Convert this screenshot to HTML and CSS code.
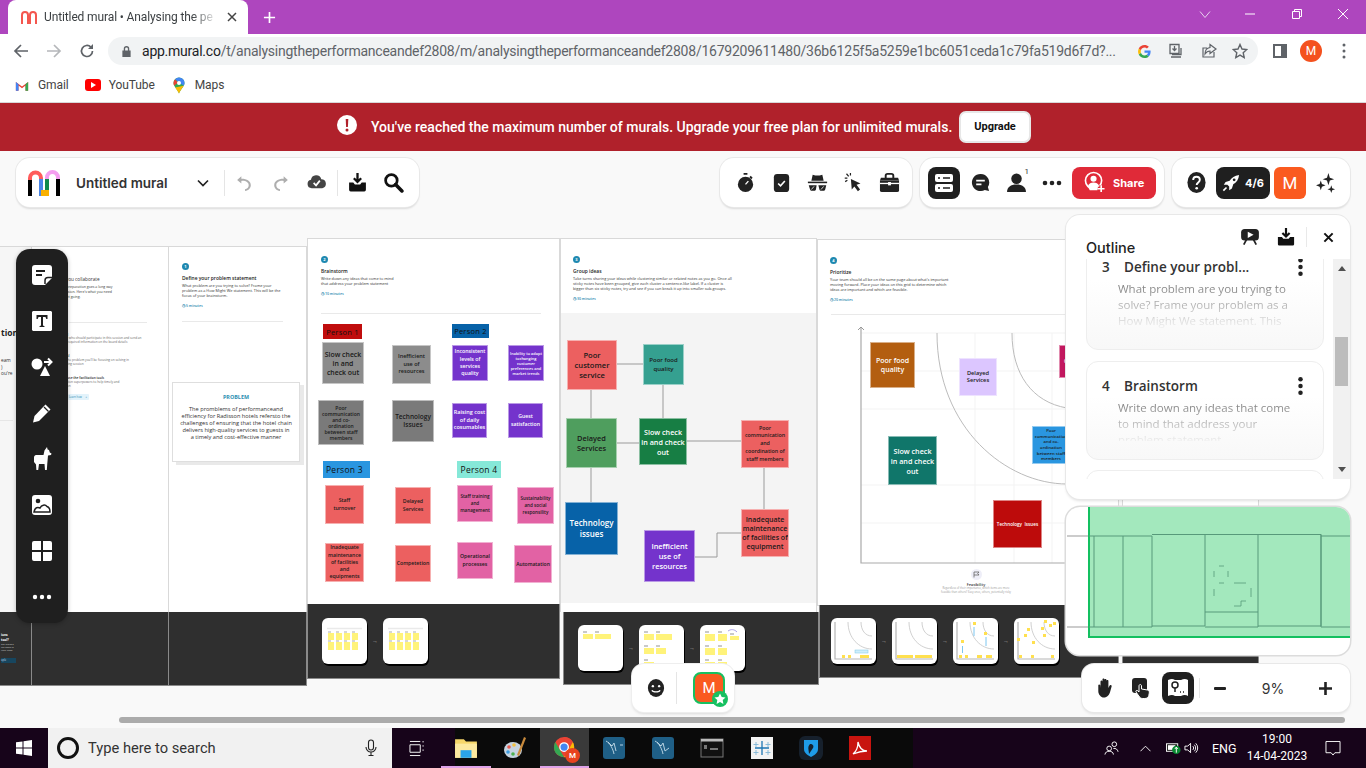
FILE: index.html
```html
<!DOCTYPE html>
<html lang="en">
<head>
<meta charset="utf-8">
<title>Untitled mural</title>
<link rel="stylesheet" href="styles.css">
</head>
<body>
<div class="tabstrip">
  <div class="tab">
    <svg class="fav" viewBox="0 0 18 16"><path d="M2 15V6a3 3 0 0 1 6 0v8h2V6a3 3 0 0 1 6 0v9" fill="none" stroke="#f4574f" stroke-width="2"/></svg>
    <span class="tab-title">Untitled mural • Analysing the pe</span>
    <svg class="tab-x" viewBox="0 0 10 10"><path d="M1 1l8 8M9 1l-8 8" stroke="#444" stroke-width="1.5"/></svg>
  </div>
  <svg class="newtab" viewBox="0 0 14 14"><path d="M7 1v12M1 7h12" stroke="#fff" stroke-width="1.8"/></svg>
  <div class="winctl">
    <svg viewBox="0 0 12 12"><path d="M1 3.5l5 6 5-6" fill="none" stroke="#e8d0ee" stroke-width="1"/></svg>
    <svg viewBox="0 0 12 12"><path d="M1 6h10" stroke="#fff"/></svg>
    <svg viewBox="0 0 12 12"><path d="M1.5 3.5h7v7h-7zM3.5 3.5v-2h7v7h-2" fill="none" stroke="#fff"/></svg>
    <svg viewBox="0 0 12 12"><path d="M1 1l10 10M11 1L1 11" stroke="#fff"/></svg>
  </div>
</div>

<div class="toolbar">
  <svg class="nav" viewBox="0 0 16 16"><path d="M15 8H2M8 2L2 8l6 6" fill="none" stroke="#5f6368" stroke-width="1.7"/></svg>
  <svg class="nav" viewBox="0 0 16 16"><path d="M1 8h13M8 2l6 6-6 6" fill="none" stroke="#b5b7ba" stroke-width="1.7"/></svg>
  <svg class="nav" viewBox="0 0 16 16"><path d="M13.5 8a5.5 5.5 0 1 1-1.6-3.9" fill="none" stroke="#5f6368" stroke-width="1.7"/><path d="M14 1v5H9z" fill="#5f6368"/></svg>
  <div class="omnibox">
    <svg class="lock" viewBox="0 0 12 14"><path d="M3 6V4a3 3 0 0 1 6 0v2h1.500v7h-9V6zm1.500 0h3V4a1.500 1.500 0 0 0-3 0z" fill="#5f6368"/></svg>
    <span class="url"><b>app.mural.co</b>/t/analysingtheperformanceandef2808/m/analysingtheperformanceandef2808/1679209611480/36b6125f5a5259e1bc6051ceda1c79fa519d6f7d?...</span>
    <svg class="omni-g" viewBox="0 0 16 16"><path d="M14.500 8.200c0-.5 0-.9-.1-1.300H8v2.500h3.700c-.2.900-.7 1.600-1.400 2.100l2.200 1.700c1.300-1.200 2-3 2-5z" fill="#4285f4"/><path d="M8 15c1.900 0 3.500-.6 4.500-1.800l-2.200-1.700c-.6.400-1.400.700-2.300.700-1.800 0-3.300-1.200-3.800-2.800L1.900 11.200C3 13.500 5.300 15 8 15z" fill="#34a853"/><path d="M4.200 9.400c-.3-.9-.3-1.900 0-2.800L1.900 4.800c-1 1.900-1 4.500 0 6.400z" fill="#fbbc05"/><path d="M8 3.800c1 0 1.900.3 2.600 1l2-2C11.400 1.700 9.800 1 8 1 5.300 1 3 2.500 1.900 4.800l2.300 1.800C4.700 5 6.200 3.800 8 3.800z" fill="#ea4335"/></svg>
    <svg class="omni-a" viewBox="0 0 16 16"><path d="M2 1.500h9v9H2zM13 5v6.500H4" fill="none" stroke="#5f6368" stroke-width="1.300"/><path d="M6.500 3v4M4.500 5.500l2 2 2-2" fill="none" stroke="#5f6368" stroke-width="1.300"/><path d="M3 14h10" stroke="#5f6368" stroke-width="1.500"/></svg>
    <svg class="omni-b" viewBox="0 0 16 16"><path d="M13 9v5H2V5h4M9 1.500L15 6l-6 4.500V8C6 8 5 9.500 4 11c0-4 2-6 5-6.500z" fill="none" stroke="#5f6368" stroke-width="1.200"/></svg>
    <svg class="omni-c" viewBox="0 0 16 16"><path d="M8 1.500l2 4.500 4.800.5-3.600 3.200 1 4.800L8 12.100l-4.200 2.400 1-4.800L1.200 6.500 6 6z" fill="none" stroke="#5f6368" stroke-width="1.400"/></svg>
  </div>
  <svg class="side" viewBox="0 0 14 14"><path d="M1 1h12v12H1z" fill="none" stroke="#5f6368" stroke-width="2"/><path d="M8 1h5v12H8z" fill="#5f6368"/></svg>
  <div class="avatar">M</div>
  <svg class="kebab" viewBox="0 0 4 16"><circle cx="2" cy="2" r="1.500"/><circle cx="2" cy="8" r="1.500"/><circle cx="2" cy="14" r="1.500"/></svg>
</div>

<div class="bookmarks">
  <svg class="bm-icon" viewBox="0 0 16 12"><path d="M1 12V2l7 5 7-5v10h-3V6L8 9 4 6v6z" fill="#ea4335"/><path d="M1 12V2l3 2.500V12z" fill="#4285f4"/><path d="M15 12V2l-3 2.500V12z" fill="#34a853"/></svg>
  <span class="bm-text">Gmail</span>
  <svg class="bm-icon bm-yt" viewBox="0 0 16 12"><rect width="16" height="12" rx="3" fill="#f00"/><path d="M6 3l5 3-5 3z" fill="#fff"/></svg>
  <span class="bm-text">YouTube</span>
  <svg class="bm-icon bm-map" viewBox="0 0 12 16"><path d="M6 0a5.500 5.500 0 0 0-5.500 5.500C.5 9 4.500 12 6 16c1.500-4 5.500-7 5.500-10.500A5.500 5.500 0 0 0 6 0z" fill="#34a853"/><path d="M6 0a5.500 5.500 0 0 1 5.500 5.500c0 1-.3 1.800-.8 2.700L2 2C3 .8 4.400 0 6 0z" fill="#4285f4"/><path d="M.5 5.500C.5 4.200 1 3 2 2l3 3-3.800 3.300C.8 7.400.5 6.500.5 5.500z" fill="#ea4335"/><path d="M10.700 8.200C9 11 6.900 13.300 6 16c-.8-2.200-2.500-4-3.800-6z" fill="#fbbc05"/><circle cx="6" cy="5.500" r="2" fill="#fff"/></svg>
  <span class="bm-text">Maps</span>
</div>

<div class="banner">
  <svg class="banner-i" viewBox="0 0 20 20"><circle cx="10" cy="10" r="10" fill="#fff"/><path d="M8.700 4h2.600l-.4 8H9.100z" fill="#b0212b"/><circle cx="10" cy="15" r="1.500" fill="#b0212b"/></svg>
  <span class="banner-text">You've reached the maximum number of murals. Upgrade your free plan for unlimited murals.</span>
  <span class="upgrade">Upgrade</span>
</div>

<main class="board">
  <!-- Canvas: the mural's panels keep their own place on the free canvas -->
  <section class="panel pa">
    <div class="pa-title">tion</div>
    <p class="pa-text">eam<br>)<br>ou're</p>
    <div class="pa-line"></div>
  </section>
  <div class="strip sa"><div class="sa-text">ions<br>tool?</div><div class="sa-small">Get aligned<br>the goals in<br>your team</div><div class="sa-btn">ople</div></div>

  <section class="panel pb">
    <h3 class="pb-h">Before you collaborate</h3>
    <p class="pb-p">A little bit of preparation goes a long way<br>to a great session. Here's what you need<br>before you get going.</p>
    <div class="rule rule-b"></div>
    <p class="pb-s"><b>Set up sharing</b><br>Invite everyone who should participate in this session and send an<br>email with the required information on the board details</p>
    <p class="pb-s"><b>Define the goal</b><br>Clearly define the problem you'll be focusing on solving in<br>the brainstorming session</p>
    <p class="pb-s"><b>Learn how to use the facilitation tools</b><br>Use the facilitation superpowers to help timely and<br>engaging session</p>
    <div class="pb-btn">Learn how <span>+</span></div>
  </section>
  <div class="strip sb"></div>

  <section class="panel pc">
    <div class="hdr hdr-c">
      <span class="num">1</span>
      <h3>Define your problem statement</h3>
      <p>What problem are you trying to solve? Frame your<br>problem as a How Might We statement. This will be the<br>focus of your brainstorm.</p>
      <div class="time">◷ 5 minutes</div>
    </div>
    <div class="rule rule-c"></div>
    <div class="problem">
      <h4>PROBLEM</h4>
      <p>The promblems of performanceand<br>efficiency for Radisson hotels refersto the<br>challenges of ensuring that the hotel chain<br>delivers high-quality services to guests in<br>a timely  and cost-effective manner</p>
    </div>
  </section>
  <div class="strip sc"></div>

  <section class="panel pd">
    <div class="hdr hdr-d">
      <span class="num">2</span>
      <h3>Brainstorm</h3>
      <p>Write down any ideas that come to mind<br>that address your problem statement</p>
      <div class="time">◷ 10 minutes</div>
    </div>
    <div class="rule rule-d"></div>
    <div class="note lbl d1 red-l">Person 1</div>
    <div class="note gray1 d2 t69">Slow check<br>in and<br>check out</div>
    <div class="note gray1 d3 t55">Inefficient<br>use of<br>resources</div>
    <div class="note lbl d4 blue-l">Person 2</div>
    <div class="note pur d5 t52">Inconsistent<br>levels of<br>services<br>quality</div>
    <div class="note pur d6 t39">Inability to adapt<br>tochanging<br>customer<br>preferences and<br>market trends</div>
    <div class="note gray2 d7 t50">Poor<br>communication<br>and co-<br>ordination<br>between staff<br>members</div>
    <div class="note gray2 d8 t65">Technology<br>Issues</div>
    <div class="note pur d9 t55b">Raising cost<br>of daily<br>cosumables</div>
    <div class="note pur d10 t52b">Guest<br>satisfaction</div>
    <div class="note lbl d11 sky-l">Person 3</div>
    <div class="note lbl d12 mint-l">Person 4</div>
    <div class="note coral d13 t52b">Staff<br>turnover</div>
    <div class="note coral d14 t52b">Delayed<br>Services</div>
    <div class="note pink d15 t46">Staff training<br>and<br>management</div>
    <div class="note pink d16 t46">Sustainability<br>and social<br>responsility</div>
    <div class="note coral d17 t52">Inadequate<br>maintenance<br>of facilities<br>and<br>equipments</div>
    <div class="note coral d18 t52">Competetion</div>
    <div class="note pink d19 t52b">Operational<br>processes</div>
    <div class="note pink d20 t50">Automatation</div>
  </section>
  <div class="strip sd">
    <div class="thumb"><svg viewBox="0 0 45 46"><use href="#t-d"/></svg></div>
    <span class="arr">→</span>
    <div class="thumb"><svg viewBox="0 0 45 46"><use href="#t-d"/></svg></div>
  </div>

  <section class="panel pe">
    <div class="hdr hdr-e">
      <span class="num">3</span>
      <h3>Group ideas</h3>
      <p>Take turns sharing your ideas while clustering similar or related notes as you go. Once all<br>sticky notes have been grouped, give each cluster a sentence-like label. If a cluster is<br>bigger than six sticky notes, try and see if you can break it up into smaller sub-groups.</p>
      <div class="time">◷ 30 minutes</div>
    </div>
    <div class="pe-gray"></div>
    <svg class="wires" viewBox="0 0 257 374"><path d="M57 126H83M31 152V180M103 147V180M57 205H79M127 203H181M204 230V271M31 230V264M135 319H157V295H181" fill="none" stroke="#9a9a9a"/></svg>
    <div class="note coral e1 t76">Poor<br>customer<br>service</div>
    <div class="note teal e2 t60">Poor food<br>quality</div>
    <div class="note green e3 t74">Delayed<br>Services</div>
    <div class="note dgreen e4 t72">Slow check<br>in and check<br>out</div>
    <div class="note coral e5 t54">Poor<br>communication<br>and<br>coordination of<br>staff members</div>
    <div class="note navy e6 t80">Technology<br>issues</div>
    <div class="note pur e7 t74">Inefficient<br>use of<br>resources</div>
    <div class="note coral e8 t70">Inadequate<br>maintenance<br>of facilities of<br>equipment</div>
  </section>
  <div class="strip se">
    <div class="thumb"><svg viewBox="0 0 45 46"><use href="#t-e1"/></svg></div>
    <span class="arr">→</span>
    <div class="thumb"><svg viewBox="0 0 45 46"><use href="#t-e2"/></svg></div>
    <span class="arr">→</span>
    <div class="thumb"><svg viewBox="0 0 45 46"><use href="#t-e3"/></svg></div>
  </div>

  <section class="panel pf">
    <div class="hdr hdr-f">
      <span class="num">4</span>
      <h3>Prioritize</h3>
      <p>Your team should all be on the same page about what's important<br>moving forward. Place your ideas on this grid to determine which<br>ideas are important and which are feasible.</p>
      <div class="time">◷ 20 minutes</div>
    </div>
    <div class="rule rule-f"></div>
    <svg class="chart" viewBox="0 0 310 340">
      <path d="M44 94H310M44 132H310M44 170H310M44 246H310M44 284H310M158 94V324M197 94V324M235 94V324" stroke="#f3f3f3" fill="none"/>
      <path d="M120 94C120 190 190 245 250 245M195 94C195 135 215 163 250 169" stroke="#bcbcbc" fill="none"/>
      <path d="M44 88V324H310" stroke="#aaa" stroke-width="1.200" fill="none"/>
      <path d="M41 91l3-3 3 3" stroke="#999" fill="none"/>
    </svg>
    <div class="note brown f1 t70">Poor food<br>quality</div>
    <div class="note lav f2 t57">Delayed<br>Services</div>
    <div class="note mag f3 t46">Competition</div>
    <div class="note dteal f4 t72">Slow check<br>in and check<br>out</div>
    <div class="note sky f5 t43">Poor<br>communication<br>and co-<br>ordination<br>between staff<br>members</div>
    <div class="note crim f6 t46">Technology&nbsp; Issues</div>
    <div class="feas">
      <svg viewBox="0 0 11 11"><circle cx="5.500" cy="5.500" r="5.500" fill="#eeeef8"/><path d="M3 8.500V3h5L6.700 4.500 8 6H3" fill="none" stroke="#555" stroke-width=".7"/></svg>
      <b>Feasibility</b>
      <span>Regardless of their importance, which items are more<br>feasible than others? Easy ones, others, potentially risky</span>
    </div>
  </section>
  <div class="strip sf">
    <div class="thumb"><svg viewBox="0 0 45 46"><use href="#t-f"/><use href="#t-f1"/></svg></div>
    <span class="arr">→</span>
    <div class="thumb"><svg viewBox="0 0 45 46"><use href="#t-f"/><use href="#t-f2"/></svg></div>
    <span class="arr">→</span>
    <div class="thumb"><svg viewBox="0 0 45 46"><use href="#t-f"/><use href="#t-f3"/></svg></div>
    <span class="arr">→</span>
    <div class="thumb"><svg viewBox="0 0 45 46"><use href="#t-f"/><use href="#t-f4"/></svg></div>
  </div>

  <section class="panel pg"></section>
  <div class="strip sg"></div>

  <div class="hscroll"></div>

  <!-- Floating chrome of the app, over the canvas -->
  <div class="topbar">
    <div class="bar b1">
      <svg class="logo" viewBox="0 0 34 26">
        <path d="M3 26V9" stroke="#000" stroke-width="4" fill="none"/>
        <path d="M3 10V8a5.500 5.500 0 0 1 11 0v2" stroke="#ff5b5b" stroke-width="4" fill="none"/>
        <path d="M14 26V9" stroke="#4a86e8" stroke-width="4" fill="none"/>
        <rect x="14" y="20" width="8" height="6" fill="#f9b000"/>
        <path d="M20 20V8" stroke="#0f8a4c" stroke-width="4" fill="none"/>
        <path d="M20 9V7.500a5.500 5.500 0 0 1 11 0V10" stroke="#f59df0" stroke-width="4" fill="none"/>
        <path d="M31 26V9" stroke="#000" stroke-width="4" fill="none"/>
      </svg>
      <span class="mural-name">Untitled mural</span>
      <svg class="chev" viewBox="0 0 12 8"><path d="M1 1.500l5 5 5-5" fill="none" stroke="#222" stroke-width="1.700"/></svg>
      <i class="div"></i>
      <span class="cell"><svg viewBox="0 0 20 20"><path d="M7 4L3 7.500 7 11V8.500c4-.5 7 1.500 7 4 0 2-1.500 3.500-3.500 4v1.500c3.500-.5 5.500-3 5.500-5.500 0-3.500-3.500-6-9-6z" fill="#aeaeae"/></svg></span>
      <span class="cell"><svg viewBox="0 0 20 20"><path d="M13 4l4 3.500L13 11V8.500c-4-.5-7 1.500-7 4 0 2 1.500 3.500 3.500 4v1.500C6 17.500 4 15 4 12.500c0-3.500 3.500-6 9-6z" fill="#aeaeae"/></svg></span>
      <span class="cell"><svg viewBox="0 0 22 20"><path d="M6 16a4.500 4.500 0 0 1-.8-8.900A5.500 5.500 0 0 1 16 6.500a4.800 4.800 0 0 1 1 9.500z" fill="#444"/><path d="M8 10.500l2.500 2.500 4-5" fill="none" stroke="#fff" stroke-width="1.800"/></svg></span>
      <i class="div div2"></i>
      <span class="cell"><svg viewBox="0 0 20 20"><path d="M10 1v8M6.500 6L10 9.500 13.500 6" fill="none" stroke="#111" stroke-width="2.200"/><path d="M2 10h4l1.500 2h5L14 10h4v7a1.500 1.500 0 0 1-1.500 1.500h-13A1.500 1.500 0 0 1 2 17z" fill="#111"/></svg></span>
      <span class="cell"><svg viewBox="0 0 20 20"><circle cx="8" cy="8" r="5.500" fill="none" stroke="#111" stroke-width="2.600"/><path d="M12 12l6 6" stroke="#111" stroke-width="3.400" stroke-linecap="round"/></svg></span>
    </div>
    <div class="bar b2">
      <span class="cell"><svg viewBox="0 0 20 22"><path d="M8 1h4v2H8zM15.500 4l2 2-1.500 1.500-2-2z" fill="#222"/><circle cx="10" cy="13" r="8" fill="#222"/><path d="M10 13l3-3.500" stroke="#fff" stroke-width="1.400"/></svg></span>
      <span class="cell"><svg viewBox="0 0 20 22"><rect x="2" y="2" width="16" height="19" rx="3.500" fill="#222"/><path d="M6.500 12l2.500 2.500 4.500-5" fill="none" stroke="#fff" stroke-width="1.700"/></svg></span>
      <span class="cell"><svg viewBox="0 0 24 22"><path d="M5 9l1.500-7 3 1h5l3-1L19 9z" fill="#222"/><path d="M1 10h22v1.800H1z" fill="#222"/><path d="M2 14h9l-.8 5c-.2 1-1 1.500-2 1.500H5.500c-1 0-1.700-.5-2-1.500zM13 14h9l-1.200 5c-.3 1-1 1.500-2 1.500h-2.600c-1 0-1.800-.5-2-1.500z" fill="#222"/><path d="M5 19l3-3.500M16 19l3-3.500" stroke="#fff" stroke-width=".9"/></svg></span>
      <span class="cell"><svg viewBox="0 0 22 24"><path d="M8 8l11 5-4.500 1.500 4 5.500-2.500 2-4-5.500-3 3.500z" fill="#222"/><path d="M3 2l2.500 3M7.500 1v3M1 7h3M1.500 11l2.500-1.500" stroke="#222" stroke-width="1.400"/></svg></span>
      <span class="cell"><svg viewBox="0 0 22 22"><path d="M1 9h20v10a2 2 0 0 1-2 2H3a2 2 0 0 1-2-2z" fill="#222"/><path d="M7 7V4a2 2 0 0 1 2-2h4a2 2 0 0 1 2 2v3" fill="none" stroke="#222" stroke-width="2"/><path d="M1 12h20" stroke="#fff" stroke-width="1.400"/><rect x="9.500" y="10.500" width="3" height="3.500" fill="#fff"/><path d="M2 6h18l1 3H1z" fill="#222"/></svg></span>
    </div>
    <div class="bar b3">
      <span class="dbtn list"><svg viewBox="0 0 20 20"><rect x="1" y="1" width="18" height="8" rx="2" fill="#fff"/><rect x="1" y="11" width="18" height="8" rx="2" fill="#fff"/><path d="M4 5h2M9 5h7M4 15h2M9 15h7" stroke="#1f1f1f" stroke-width="1.500"/></svg></span>
      <span class="cell c3a"><svg viewBox="0 0 22 22"><path d="M11 2a9 9 0 1 1-4.500 16.800L2 20l1.300-4.200A9 9 0 0 1 11 2z" fill="#222" transform="matrix(-1 0 0 1 22 0)"/><path d="M6.500 9h9M6.500 13h5.500" stroke="#fff" stroke-width="1.700"/></svg></span>
      <span class="cell cuser"><svg viewBox="0 0 20 20"><circle cx="10" cy="6.500" r="5" fill="#222"/><path d="M1 19c0-4.500 3.500-7 9-7s9 2.500 9 7z" fill="#222"/></svg><sup class="one">1</sup></span>
      <span class="cell"><svg class="wide" viewBox="0 0 20 6"><circle cx="3" cy="3" r="2.300" fill="#222"/><circle cx="10" cy="3" r="2.300" fill="#222"/><circle cx="17" cy="3" r="2.300" fill="#222"/></svg></span>
      <span class="share"><svg viewBox="0 0 22 24"><circle cx="10" cy="10" r="8.500" fill="none" stroke="#fff" stroke-width="1.700"/><circle cx="10" cy="8" r="3.200" fill="#fff"/><path d="M4 16c1-3 3.500-4 6-4s5 1 6 4l-2 4H6z" fill="#fff"/><path d="M18 15v7M14.500 18.500h7" stroke="#e02a38" stroke-width="4"/><path d="M18 15v7M14.500 18.500h7" stroke="#fff" stroke-width="1.700"/></svg>Share</span>
    </div>
    <div class="bar b4">
      <span class="cell"><svg viewBox="0 0 22 22"><ellipse cx="11" cy="11" rx="9.500" ry="11" fill="#222"/><path d="M7.500 8.500C7.500 6 9 5 11 5s3.500 1.200 3.500 3.200c0 2.800-3.300 2.600-3.300 5.300" fill="none" stroke="#fff" stroke-width="2"/><circle cx="11.200" cy="17" r="1.400" fill="#fff"/></svg></span>
      <span class="dbtn rocket"><svg viewBox="0 0 20 20"><path d="M19 1c-5 .5-8.500 3-10.500 6.500L4 9 2 12h4l2 2v4l3-2 1.500-4.500C16 9.500 18.500 6 19 1z" fill="#fff"/><circle cx="13.500" cy="6.500" r="1.500" fill="#1f1f1f"/><path d="M1.500 18.500L5 15" stroke="#fff" stroke-width="1.800"/></svg>4/6</span>
      <span class="msq">M</span>
      <span class="cell"><svg viewBox="0 0 22 22"><path d="M13 1l1.500 5L19 7.500 14.500 9 13 14l-1.500-5L7 7.500 11.500 6zM5 9l1.200 3.500L10 14l-3.800 1.500L5 19l-1.200-3.500L0 14l3.800-1.500zM16 14l1 3 3 1-3 1-1 3-1-3-3-1 3-1z" fill="#222"/></svg></span>
    </div>
  </div>

  <nav class="tools">
    <svg viewBox="0 0 20 20"><path d="M3 0h14a3 3 0 0 1 3 3v10l-7 7H3a3 3 0 0 1-3-3V3a3 3 0 0 1 3-3z" fill="#fff"/><path d="M4 6h9M4 10h6" stroke="#1f1f1f" stroke-width="2"/><path d="M13 19v-3.500a3 3 0 0 1 3-3h4" fill="none" stroke="#1f1f1f" stroke-width="1.500"/></svg>
    <svg viewBox="0 0 20 20"><path d="M1 0h18l1 1v18l-1 1H1l-1-1V1z" fill="#fff"/><path d="M4.500 4h11v4h-1.200l-.8-2H11v8.500l1.500.7V16h-5v-.8l1.500-.7V6H6.500l-.8 2H4.500z" fill="#1f1f1f"/></svg>
    <svg viewBox="0 0 22 20"><circle cx="6" cy="7" r="5.500" fill="#fff"/><path d="M14 9l5 10H9z" fill="#fff"/><path d="M13 5h7M17 1.500L20.500 5 17 8.500" fill="none" stroke="#fff" stroke-width="2"/></svg>
    <svg viewBox="0 0 20 20"><path d="M13.500 1.500l5 5L7 18l-6 1.500L2.500 13z" fill="#fff"/><path d="M12 4l4.500 4.500" stroke="#1f1f1f" stroke-width="1.200"/></svg>
    <svg viewBox="0 0 20 24"><path d="M15 0l.6 2.500 1.400.5.800 2.500 1.700 1-.5 1.500-3 .5-.7 8-.5 6.500h-1.800l-.5-6H7l-.8 6H4.400L4 17.500 2 15v-4.500C2 8.500 3.500 8 5 8h6.500l1-4.500z" fill="#fff"/></svg>
    <svg viewBox="0 0 20 20"><rect width="20" height="20" rx="3" fill="#fff"/><circle cx="6" cy="6" r="2.300" fill="#1f1f1f"/><path d="M2 17c1-5 4-5 6-4 1.500-3 5-4 7-1.500 2 .5 3 2.500 3 5.500z" fill="none" stroke="#1f1f1f" stroke-width="1.500"/></svg>
    <svg viewBox="0 0 20 20"><path d="M2 0h7v9H0V2a2 2 0 0 1 2-2zM11 0h7a2 2 0 0 1 2 2v7h-9zM0 11h9v9H2a2 2 0 0 1-2-2zM11 11h9v7a2 2 0 0 1-2 2h-7z" fill="#fff"/></svg>
    <svg viewBox="0 0 20 6"><circle cx="3" cy="3" r="2.200" fill="#fff"/><circle cx="10" cy="3" r="2.200" fill="#fff"/><circle cx="17" cy="3" r="2.200" fill="#fff"/></svg>
  </nav>

  <div class="react">
    <svg class="smile" viewBox="0 0 20 20"><ellipse cx="10" cy="10" rx="9" ry="10" fill="#222"/><circle cx="6.500" cy="8" r="1.300" fill="#fff"/><circle cx="13.500" cy="8" r="1.300" fill="#fff"/><path d="M5.500 12.500c1 2.500 8 2.500 9 0" fill="none" stroke="#fff" stroke-width="1.400"/></svg>
    <i class="rdiv"></i>
    <span class="me">M<svg viewBox="0 0 16 16"><circle cx="8" cy="8" r="8" fill="#16c060"/><path d="M8 2.500l1.700 3.500 3.800.5-2.800 2.600.7 3.800L8 11l-3.400 1.900.7-3.800L2.500 6.500 6.300 6z" fill="#fff"/></svg></span>
  </div>

  <div class="rightcol">
    <aside class="outline">
      <header class="ol-head">
        <h2>Outline</h2>
        <svg class="oh1" viewBox="0 0 20 18"><path d="M4 0h12a4 4 0 0 1 4 4v5a4 4 0 0 1-4 4H4a4 4 0 0 1-4-4V4a4 4 0 0 1 4-4z" fill="#222"/><path d="M7.500 3l6.500 3.500L7.500 10z" fill="#fff"/><path d="M6 12l-3 5.500M14 12l3 5.500" stroke="#222" stroke-width="2"/></svg>
        <svg class="oh2" viewBox="0 0 20 20"><path d="M10 0v9M6 5.500L10 9.500 14 5.500" fill="none" stroke="#111" stroke-width="2.400"/><path d="M1 10h4.500l1.500 2h6l1.500-2H19v8a1.500 1.500 0 0 1-1.500 1.500h-15A1.500 1.500 0 0 1 1 18z" fill="#111"/></svg>
        <i class="ol-div"></i>
        <svg class="oh3" viewBox="0 0 12 12"><path d="M1.500 1.500l9 9M10.500 1.500l-9 9" stroke="#111" stroke-width="2.200"/></svg>
      </header>
      <div class="ol-body">
        <div class="ol-list">
          <article class="ol-card first">
            <div class="ol-title"><span>3</span><b>Define your probl...</b><svg viewBox="0 0 4 16"><circle cx="2" cy="2" r="2"/><circle cx="2" cy="8" r="2"/><circle cx="2" cy="14" r="2"/></svg></div>
            <p>What problem are you trying to<br>solve? Frame your problem as a<br>How Might We statement. This</p>
          </article>
          <article class="ol-card">
            <div class="ol-title"><span>4</span><b>Brainstorm</b><svg viewBox="0 0 4 16"><circle cx="2" cy="2" r="2"/><circle cx="2" cy="8" r="2"/><circle cx="2" cy="14" r="2"/></svg></div>
            <p>Write down any ideas that come<br>to mind that address your<br>problem statement</p>
          </article>
          <article class="ol-card"></article>
        </div>
        <div class="ol-scroll">
          <svg class="ua" viewBox="0 0 8 5"><path d="M4 0l4 5H0z" fill="#505050"/></svg>
          <div class="ol-thumb"></div>
          <svg class="da" viewBox="0 0 8 5"><path d="M4 5L0 0h8z" fill="#505050"/></svg>
        </div>
      </div>
    </aside>
    <div class="minimap">
      <svg viewBox="0 0 283 148">
        <path d="M0 29H22M0 120H22" stroke="#999"/>
        <rect x="22" y="0" width="261" height="130" fill="#a3e8bd"/>
        <path d="M22 0V130H283" fill="none" stroke="#13c060" stroke-width="2"/>
        <g fill="none" stroke="#57997a" stroke-width="1">
          <path d="M22 29H27V120H22M27 29H56V120H27M56 29H85V120H56M85 27.500H138V119H85M138 27.500H191V120H138M191 27.500H254V119H191M254 29H283M254 120H283M254 27.500V120M138 105H191"/>
          <path d="M152 59h5M147 64v6M161 64v6M152 76h5M167 76h12M147 82v7M184 81v9M167 99h7v-5h5" stroke-width=".8"/>
        </g>
      </svg>
    </div>
    <div class="zoombar">
      <svg class="zi zi1" viewBox="0 0 20 20"><path d="M2 7.500c0-1 1.500-1 1.800 0L4 10V4c0-1 1.700-1 1.800 0v4-6c0-1 1.800-1 1.800 0v6-5.500c0-1 1.800-1 1.800 0V8 3.500c0-1 1.800-1 1.800 0V10l1-2c.6-1.200 2.300-.6 1.900.7l-1.400 5c-.7 2.600-2.500 5-5.700 5C4.500 18.700 2 16 2 13z" fill="#222" transform="translate(1 0)"/></svg>
      <svg class="zi zi2" viewBox="0 0 22 22"><rect x="1" y="1" width="15" height="15" rx="3" fill="#222"/><path d="M8 9c0-2 2.500-2 2.500 0v3l6 1c1.500.5 2 1.500 1.800 3l-.5 2.500c-.4 2-2 3-4 3h-2c-2 0-3-1-4-2.500L5 15c-.6-1.300.8-2.200 1.800-1.200L8 15z" fill="#222" stroke="#fff" stroke-width="1"/></svg>
      <span class="dbtn map"><svg viewBox="0 0 22 20"><path d="M1 2c3-1.500 5-1.500 7 0l6 0c2.500-1.500 5-1.500 7 0v16c-2-1.500-4.500-1.500-7 0H8c-2-1.500-4-1.500-7 0z" fill="#fff"/><circle cx="8" cy="7" r="3" fill="none" stroke="#1f1f1f" stroke-width="1.500"/><path d="M8 10v4" stroke="#1f1f1f" stroke-width="1.500"/><path d="M13 14h1M16 14h1" stroke="#1f1f1f" stroke-width="1.500"/></svg></span>
      <i class="zdiv"></i>
      <span class="zminus"></span>
      <span class="zpct">9%</span>
      <svg class="zplus" viewBox="0 0 12 12"><path d="M6 0v12M0 6h12" stroke="#222" stroke-width="2.400"/></svg>
    </div>
  </div>
</main>

<footer class="taskbar">
  <svg class="ti win" viewBox="0 0 16 16"><path d="M0 2.300l6.500-.9V7.500H0zM7.500 1.300L16 0v7.500H7.500zM0 8.500h6.500v6.100L0 13.700zM7.500 8.500H16V16l-8.500-1.200z" fill="#fff"/></svg>
  <div class="search">
    <i class="ring"></i>
    <span>Type here to search</span>
    <svg viewBox="0 0 12 18"><rect x="3.500" y="1" width="5" height="10" rx="2.500" fill="none" stroke="#222" stroke-width="1.100"/><path d="M1 8a5 5 0 0 0 10 0M6 13v3M3.500 16.500h5" fill="none" stroke="#222" stroke-width="1.100"/></svg>
  </div>
  <div class="tasks">
    <span class="task ptv"><svg viewBox="0 0 16 18"><path d="M1 5h11v8H1zM1 1.500h11M1 16.500h11M15 1v1.500M15 5.500v1.500M15 10v1.500" fill="none" stroke="#fff" stroke-width="1"/></svg></span>
    <span class="task on"><svg viewBox="0 0 22 22"><path d="M1 3h8l2 2h10v15H1z" fill="#f6d66a"/><path d="M1 7h20v13H1z" fill="#fce9a0"/><rect x="6" y="13" width="10" height="7" fill="#2aa3e8"/></svg></span>
    <span class="task"><svg viewBox="0 0 24 24"><ellipse cx="10" cy="14" rx="9" ry="8" fill="#c5d3e0"/><circle cx="6" cy="11" r="1.800" fill="#e85a4f"/><circle cx="11" cy="9" r="1.800" fill="#f2c040"/><circle cx="5" cy="16" r="1.800" fill="#3c9be0"/><circle cx="10" cy="18" r="1.800" fill="#4cb050"/><path d="M21 1l2 1-7 18-2-1z" fill="#c98a3c"/></svg></span>
    <span class="task active"><svg viewBox="0 0 26 26"><circle cx="12" cy="12" r="11" fill="#ea4335"/><path d="M12 1a11 11 0 0 1 9.500 5.500H12z" fill="#ea4335"/><path d="M2.500 6.500L8 16l4 7A11 11 0 0 1 2.500 6.500z" fill="#34a853"/><path d="M21.500 6.500A11 11 0 0 1 12 23l5-8.500z" fill="#fbbc05"/><circle cx="12" cy="12" r="4.600" fill="#4285f4" stroke="#fff" stroke-width="1.400"/></svg><b class="cm">M</b></span>
    <span class="task"><svg viewBox="0 0 24 24"><rect x="1" y="1" width="22" height="22" rx="3" fill="#1f5f86"/><path d="M4 5c4 2 7 8 8 13M6 6l4 4 2-3 2 8M18 9h3" fill="none" stroke="#b7d2e2" stroke-width="1"/></svg></span>
    <span class="task"><svg viewBox="0 0 24 24"><rect x="1" y="1" width="22" height="22" rx="3" fill="#1f5f86"/><path d="M4 5c4 2 7 8 8 13M6 6l4 4 2-3 2 8 4-3" fill="none" stroke="#b7d2e2" stroke-width="1"/></svg></span>
    <span class="task"><svg viewBox="0 0 24 24"><rect x="1" y="3" width="22" height="18" fill="#111" stroke="#777"/><rect x="1" y="3" width="22" height="2.500" fill="#bbb"/><path d="M4 10h3M4 12h3M10 13h8" stroke="#ddd"/></svg></span>
    <span class="task"><svg viewBox="0 0 24 24"><rect x="1" y="1" width="22" height="22" fill="#f3f3f3"/><path d="M12 5v14M5 12h14" stroke="#1f77b4" stroke-width="1.300"/><path d="M6 6v5M3.500 8.500h5M18 6v5M15.500 8.500h5M6 14v5M3.500 16.500h5M18 14v5M15.500 16.500h5" stroke="#7fb5d6" stroke-width=".9"/></svg></span>
    <span class="task"><svg viewBox="0 0 24 24"><rect x="0" y="0" width="24" height="24" rx="6" fill="#16202c"/><path d="M5 4h14v9c0 4-3.500 6-7 8-3.500-2-7-4-7-8z" fill="#1e9be8"/><path d="M11 8c3 0 4 2 3 4l-2 3-2 3c0-4-2-7 1-10z" fill="#16202c"/></svg></span>
    <span class="task"><svg viewBox="0 0 22 24"><rect width="22" height="24" fill="#c8140f"/><path d="M4 18c4-3 5-8 5-12 1 5 4 9 9 9-5 0-9 1-14 3z" fill="none" stroke="#fff" stroke-width="1.300"/></svg></span>
  </div>
  <div class="tray">
    <svg class="tr1" viewBox="0 0 16 16"><circle cx="5.500" cy="8.500" r="2.500" fill="none" stroke="#fff"/><path d="M1 15c.5-2.500 2-3.500 4.500-3.500S10 12.500 10 15" fill="none" stroke="#fff"/><circle cx="11" cy="4" r="2.500" fill="none" stroke="#fff"/><path d="M10 8.500c2.500-.5 4.500 1 5 3.500" fill="none" stroke="#fff"/></svg>
    <svg class="tr2" viewBox="0 0 12 7"><path d="M.5 6.500L6 1l5.500 5.500" fill="none" stroke="#fff"/></svg>
    <svg class="tr3" viewBox="0 0 16 14"><rect x=".5" y="2.500" width="12" height="8" fill="#111" stroke="#fff"/><rect x="2" y="4" width="8" height="5" fill="#fff"/><circle cx="11" cy="9" r="4.500" fill="#0a8a32"/><path d="M11 6v6M9.500 8L11 6l1.500 2" fill="none" stroke="#fff" stroke-width="1"/></svg>
    <svg class="tr4" viewBox="0 0 16 14"><path d="M1 5h3l3-3v10L4 9H1z" fill="none" stroke="#fff"/><path d="M9.500 5a3 3 0 0 1 0 4M11 3.500a5 5 0 0 1 0 7M12.500 2a7 7 0 0 1 0 10" fill="none" stroke="#fff"/></svg>
    <span class="lang">ENG</span>
    <div class="clock"><span>19:00</span><span>14-04-2023</span></div>
    <svg class="tr5" viewBox="0 0 16 16"><path d="M.5.500h15v12H10L8 15l-2-2.500H.5z" fill="none" stroke="#fff"/></svg>
  </div>
</footer>

<svg class="defs" width="0" height="0" aria-hidden="true">
  <defs>
    <symbol id="t-d" viewBox="0 0 45 46">
      <path d="M5 10.500H40" stroke="#eaeaea" stroke-width="1.500"/>
      <path d="M6 14h3M14 14h3M22 14h3M30 14h3M6 23h3M14 23h3M22 23h3M30 23h3" stroke="#777" stroke-width=".6"/>
      <path d="M6 15h6v7H6zM14 15h6v7h-6zM22 15h6v7h-6zM30 15h6v7h-6zM6 24h6v8H6zM14 24h6v8h-6zM22 24h6v8h-6zM30 24h6v8h-6z" fill="#fff37a"/>
    </symbol>
    <symbol id="t-e1" viewBox="0 0 45 46">
      <path d="M5 7h4M17 7h4" stroke="#666" stroke-width=".7"/>
      <path d="M5 9h10v5H5zM17 9h16v5H17z" fill="#fff37a"/>
    </symbol>
    <symbol id="t-e2" viewBox="0 0 45 46">
      <path d="M5 7h4M17 7h4M5 21h4M17 21h4M5 35h4" stroke="#666" stroke-width=".7"/>
      <path d="M5 9h10v6H5zM17 9h16v6H17zM5 23h10v6H5zM17 23h10v6H17zM5 37h10v6H5z" fill="#fff37a"/>
    </symbol>
    <symbol id="t-e3" viewBox="0 0 45 46">
      <path d="M28 6c3-2 6-2 9 1" fill="none" stroke="#a9a0e8"/>
      <path d="M5 7h4M18 7h4M30 9h4M5 21h4M18 21h4M5 35h4M18 35h4" stroke="#666" stroke-width=".7"/>
      <path d="M5 9h10v7H5zM18 9h9v7h-9zM30 11h9v4h-9zM5 23h10v7H5zM18 23h9v7h-9zM5 37h10v6H5zM18 37h9v6h-9z" fill="#fff37a"/>
    </symbol>
    <symbol id="t-f" viewBox="0 0 45 46">
      <path d="M17 4C17 20 28 31 41 31M30 4C30 12 34 18 41 18" fill="none" stroke="#c4c4c4" stroke-width=".8"/>
      <path d="M4 4V41H41" fill="none" stroke="#b5b5b5" stroke-width="1.200"/>
    </symbol>
    <symbol id="t-f1" viewBox="0 0 45 46">
      <rect x="24" y="32" width="13" height="3" fill="#cfeefb" stroke="#7cc8e8" stroke-width=".5"/>
      <path d="M11 37h3v3h-3zM17 37h3v3h-3zM29 37h9v3h-9z" fill="#ffe04f"/>
    </symbol>
    <symbol id="t-f2" viewBox="0 0 45 46">
      <path d="M5 37h16v3H5zM23 37h17v3H23z" fill="#ffe04f"/>
    </symbol>
    <symbol id="t-f3" viewBox="0 0 45 46">
      <path d="M6 37h3v3H6zM12 37h3v3h-3zM24 37h5v3h-5zM33 37h6v3h-6zM20 4h3v3h-3zM31 14h3v3h-3zM8 22h3v3H8z" fill="#ffe04f"/>
      <path d="M9.500 35v-7M21 18V9M33 28v-9" stroke="#5ab8ec" stroke-width=".8"/>
    </symbol>
    <symbol id="t-f4" viewBox="0 0 45 46">
      <path d="M5 37h3v3H5zM17 37h3v3h-3zM37 37h3v3h-3zM3 20h3v3H3zM10 16h3v3h-3zM13 10h3v3h-3zM27 9h3v3h-3zM30 2h3v3h-3zM35 6h3v3h-3zM39 4h3v3h-3zM29 16h3v3h-3zM18 23h3v3h-3z" fill="#ffe04f"/>
    </symbol>
  </defs>
</svg>
</body>
</html>
```
FILE: styles.css
```css
* { box-sizing: border-box; }
html, body { margin: 0; height: 100%; }
body {
  width: 1366px; height: 768px; overflow: hidden;
  display: flex; flex-direction: column;
  font-family: Roboto, "Liberation Sans", sans-serif;
  background: #f9f9f9; color: #222;
}
h2, h3, h4, p { margin: 0; font-weight: inherit; font-size: inherit; }

/* Browser chrome */
.tabstrip { height: 34px; background: #ae46be; display: flex; align-items: flex-start; padding-left: 8px; flex: none; position: relative; }
.tab { width: 240px; height: 34px; background: #fff; border-radius: 8px 8px 0 0; display: flex; align-items: center; padding: 0 0 0 12px; }
.fav { width: 18px; height: 16px; flex: none; }
.tab-title { margin-left: 6px; width: 174px; font-size: 12px; color: #3c4043; white-space: nowrap; overflow: hidden; letter-spacing: -.12px; -webkit-mask-image: linear-gradient(90deg,#000 85%,transparent); mask-image: linear-gradient(90deg,#000 85%,transparent); }
.tab-x { width: 10px; height: 10px; margin-left: 9px; flex: none; }
.newtab { width: 13px; height: 13px; margin: 11px 0 0 15px; flex: none; }
.winctl { margin-left: auto; display: flex; height: 28px; align-items: center; }
.winctl svg { width: 12px; height: 12px; }
.winctl svg:nth-child(1) { margin-right: 33px; }
.winctl svg:nth-child(2) { margin-right: 35px; }
.winctl svg:nth-child(3) { margin-right: 34px; }
.winctl svg:nth-child(4) { margin-right: 17px; }

.toolbar { height: 34px; background: #fff; display: flex; align-items: center; padding-left: 13px; flex: none; }
.nav { width: 16px; height: 16px; margin-right: 17px; flex: none; }
.omnibox { width: 1150px; height: 28px; margin-left: -4px; background: #f1f3f4; border-radius: 14px; display: flex; align-items: center; padding-left: 13px; flex: none; }
.lock { width: 11px; height: 13px; flex: none; }
.url { margin-left: 10px; width: 980px; flex: none; font-size: 14px; color: #5f6368; white-space: nowrap; letter-spacing: -.24px; }
.url b { font-weight: 400; color: #202124; }
.omni-g { width: 15px; height: 15px; margin-left: 15px; flex: none; }
.omni-a { width: 16px; height: 16px; flex: none; margin-left: 16px; }
.omni-b { width: 16px; height: 16px; flex: none; margin-left: 17px; }
.omni-c { width: 16px; height: 16px; flex: none; margin-left: 15px; }
.side { width: 14px; height: 14px; margin-left: 15px; flex: none; }
.avatar { width: 22px; height: 22px; border-radius: 50%; background: #f4511e; color: #fff; font-size: 12px; text-align: center; line-height: 22px; margin-left: 13px; flex: none; }
.kebab { width: 4px; height: 16px; margin-left: 20px; flex: none; fill: #5f6368; }

.bookmarks { height: 35px; background: #fff; border-bottom: 1px solid #d8d8d8; display: flex; align-items: center; padding: 0 0 0 15px; flex: none; font-size: 12px; color: #444; letter-spacing: -.08px; }
.bm-icon { width: 14px; height: 11px; flex: none; }
.bm-text { margin-left: 9px; }
.bm-yt { width: 16px; margin-left: 16px; height: 12px; }
.bm-yt + .bm-text { margin-left: 8px; }
.bm-map { width: 12px; height: 17px; margin-left: 18px; }
.bm-map + .bm-text { margin-left: 10px; }

.banner { height: 48px; background: #b0212b; color: #fff; display: flex; align-items: center; padding-left: 337px; flex: none; font-size: 14px; font-weight: 500; }
.banner-i { width: 20px; height: 20px; flex: none; margin-top: -4px; }
.banner-text { margin-left: 14px; width: 588px; white-space: nowrap; flex: none; }
.upgrade { width: 72px; height: 32px; background: #fff; color: #111; border: 2px solid #e7e7e7; border-radius: 7px; font-size: 11px; font-weight: 700; text-align: center; line-height: 27px; flex: none; }

/* Board */
.board { position: relative; flex: 1; overflow: hidden; background: #f9f9f9; font-family: "Open Sans", sans-serif; }
.panel { position: absolute; background: #fff; border: 1px solid #d9d9d9; }
.strip { position: absolute; background: #2f2f2f; border: 1px solid #8a8a8a; border-top: 0; display: flex; align-items: center; }
.pa { left: -20px; top: 95px; width: 52px; height: 367px; background: #f6f6f6; }
.sa { left: -20px; top: 461px; width: 52px; height: 74px; display: block; color: #fff; }
.pb { left: 31px; top: 95px; width: 138px; height: 367px; }
.sb { left: 31px; top: 461px; width: 138px; height: 74px; }
.pc { left: 168px; top: 95px; width: 139px; height: 367px; }
.sc { left: 168px; top: 461px; width: 139px; height: 74px; }
.pd { left: 307px; top: 87px; width: 253px; height: 367px; }
.sd { left: 307px; top: 453px; width: 253px; height: 75px; padding-left: 14px; }
.pe { left: 560px; top: 87px; width: 257px; height: 374px; border-bottom: 0; }
.se { left: 563px; top: 461px; width: 256px; height: 73px; padding-left: 14px; }
.pf { left: 817px; top: 88px; width: 302px; height: 367px; }
.sf { left: 819px; top: 454px; width: 300px; height: 73px; padding-left: 11px; }
.pg { left: 1122px; top: 95px; width: 137px; height: 367px; }
.sg { left: 1122px; top: 461px; width: 137px; height: 90px; }

.pa-title { position: absolute; left: 20px; top: 80px; font-size: 8.500px; font-weight: 700; color: #222; }
.pa-text { position: absolute; left: 20px; top: 110px; font-size: 4.800px; line-height: 6.500px; color: #333; }
.pa-line { position: absolute; left: 0; right: 18px; top: 173px; height: 1px; background: #e6e6e6; }
.sa-text { position: absolute; left: 20px; top: 21px; font-size: 3.200px; line-height: 4.500px; font-weight: 700; }
.sa-small { position: absolute; left: 20px; top: 31px; font-size: 2.400px; line-height: 3px; color: #ccc; }
.sa-btn { position: absolute; left: 20px; top: 46px; width: 15px; height: 5px; background: #17465f; color: #cde; font-size: 2.600px; line-height: 5px; }

.pb-h { position: absolute; left: 18px; top: 29px; font-size: 4.700px; font-weight: 400; white-space: nowrap; color: #333; }
.pb-p { position: absolute; left: 14px; top: 37px; font-size: 3.500px; line-height: 5px; white-space: nowrap; color: #333; }
.rule { position: absolute; height: 1px; background: #e9e9e9; }
.rule-b { left: 37px; top: 75px; width: 78px; }
.pb-s { font-size: 3.100px; line-height: 3.900px; color: #666; white-space: nowrap; margin: 0; position: relative; left: 14px; top: 86px; height: 22px; }
.pb-s b { color: #222; font-size: 3.200px; font-weight: 600; }
.pb-btn { position: absolute; left: 36px; top: 147px; width: 21px; height: 6px; background: #e3f3fb; border-radius: 1px; font-size: 2.600px; line-height: 6px; color: #1e88b0; text-indent: 1px; }
.pb-btn span { position: absolute; right: 2px; top: 0; text-indent: 0; }

.hdr .num { display: block; width: 7px; height: 7px; border-radius: 50%; background: #1e88b0; color: #fff; font-size: 4px; line-height: 7px; text-align: center; font-weight: 700; }
.hdr h3 { font-weight: 600; font-size: 4.900px; color: #222; white-space: nowrap; line-height: 6px; margin-top: 5px; }
.hdr p { font-size: 3.850px; line-height: 5px; color: #333; white-space: nowrap; margin-top: 2px; }
.hdr .time { font-size: 3.500px; color: #1e88b0; font-weight: 600; margin-top: 5px; line-height: 5px; }
.hdr-c { margin: 16px 0 0 13px; }
.hdr-d { margin: 17px 0 0 13px; }
.hdr-e { margin: 17px 0 0 12px; position: relative; }
.hdr-f { margin: 17px 0 0 12px; }
.rule-c { left: 13px; top: 74px; width: 101px; }
.rule-d { left: 13px; top: 74px; width: 220px; }
.rule-f { left: 13px; top: 74px; width: 290px; }

.problem { position: absolute; left: 3px; top: 135px; width: 128px; height: 80px; background: #fff; border: 1px solid #dedede; box-shadow: 4px 3px 0 #e9e9e9; text-align: center; padding-top: 11px; }
.problem h4 { font-size: 5.400px; font-weight: 700; color: #2c8fb2; line-height: 7px; }
.problem p { font-size: 5.650px; line-height: 7px; color: #333; margin-top: 5px; white-space: pre-line; }

.note { position: absolute; display: flex; align-items: center; justify-content: center; text-align: center; font-weight: 600; overflow: hidden; border: 1px solid rgba(255,255,255,.5); color: #1a1a1a; white-space: nowrap; }
.lbl { font-size: 7.500px; letter-spacing: .25px; font-weight: 400; color: #111; border: 0; }
.red-l { background: #c00d0d; } .blue-l { background: #0762a8; } .sky-l { background: #2a96e0; font-size: 8.500px; justify-content: flex-start; padding-left: 3px; } .mint-l { background: #86e8d8; font-size: 8.500px; }
.gray1 { background: #8c8c8c; } .gray2 { background: #7a7a7a; }
.pur { background: #7433cc; color: #fff; } .coral { background: #ec6060; } .pink { background: #e262a4; }
.teal { background: #35a090; } .green { background: #4f9e5e; } .dgreen { background: #177e44; color: #fff; } .navy { background: #0762a8; color: #fff; }
.brown { background: #b35e10; color: #fff; } .lav { background: #dcc6ff; } .mag { background: #c2185f; color: #fff; justify-content: flex-start; padding-left: 4px; } .dteal { background: #10766a; color: #fff; } .sky { background: #2a96e0; } .crim { background: #bd0b0b; color: #fff; }
.t39 { font-size: 3.900px; line-height: 5px; }
.t43 { font-size: 4.300px; line-height: 5.700px; }
.t46 { font-size: 4.600px; line-height: 7px; }
.t50 { font-size: 5px; line-height: 6px; }
.t52 { font-size: 5.200px; line-height: 7.300px; }
.t52b { font-size: 5.200px; line-height: 7.600px; }
.t54 { font-size: 5.300px; line-height: 7.700px; }
.t55 { font-size: 5.500px; line-height: 7.600px; }
.t55b { font-size: 5.500px; line-height: 7.500px; }
.t57 { font-size: 5.700px; line-height: 7.500px; }
.t60 { font-size: 6px; line-height: 8.500px; }
.t65 { font-size: 6.500px; line-height: 8px; }
.t69 { font-size: 6.900px; line-height: 9px; }
.t70 { font-size: 7px; line-height: 9px; }
.t72 { font-size: 7.200px; line-height: 10px; }
.t74 { font-size: 7.400px; line-height: 10.300px; }
.t76 { font-size: 7.600px; line-height: 10px; }
.t80 { font-size: 8px; line-height: 10.500px; }

/* brainstorm notes */
.d1 { left: 15px; top: 85px; width: 39px; height: 15px; } .d2 { left: 14px; top: 103px; width: 42px; height: 42px; } .d3 { left: 84px; top: 106px; width: 39px; height: 39px; }
.d4 { left: 144px; top: 85px; width: 37px; height: 14px; } .d5 { left: 144px; top: 106px; width: 36px; height: 36px; } .d6 { left: 200px; top: 106px; width: 36px; height: 36px; }
.d7 { left: 10px; top: 161px; width: 46px; height: 45px; } .d8 { left: 84px; top: 161px; width: 42px; height: 42px; } .d9 { left: 144px; top: 164px; width: 35px; height: 35px; } .d10 { left: 200px; top: 164px; width: 35px; height: 35px; }
.d11 { left: 15px; top: 222px; width: 47px; height: 17px; } .d12 { left: 149px; top: 222px; width: 44px; height: 17px; }
.d13 { left: 17px; top: 246px; width: 39px; height: 39px; } .d14 { left: 87px; top: 248px; width: 36px; height: 37px; } .d15 { left: 149px; top: 246px; width: 36px; height: 37px; } .d16 { left: 209px; top: 248px; width: 37px; height: 37px; }
.d17 { left: 17px; top: 304px; width: 39px; height: 39px; } .d18 { left: 87px; top: 306px; width: 36px; height: 37px; } .d19 { left: 149px; top: 303px; width: 36px; height: 37px; } .d20 { left: 206px; top: 306px; width: 38px; height: 38px; }

/* group ideas */
.pe-gray { position: absolute; left: 0; right: 0; top: 74px; height: 290px; background: #f4f4f4; }
.wires { position: absolute; left: -1px; top: -1px; width: 257px; height: 374px; }
.e1 { left: 6px; top: 101px; width: 50px; height: 50px; } .e2 { left: 82px; top: 105px; width: 41px; height: 41px; } .e3 { left: 5px; top: 179px; width: 51px; height: 50px; } .e4 { left: 78px; top: 179px; width: 48px; height: 47px; }
.e5 { left: 180px; top: 181px; width: 48px; height: 48px; } .e6 { left: 4px; top: 263px; width: 53px; height: 53px; } .e7 { left: 83px; top: 291px; width: 51px; height: 52px; } .e8 { left: 180px; top: 270px; width: 48px; height: 48px; }

/* prioritize */
.chart { position: absolute; left: -1px; top: -1px; width: 310px; height: 340px; }
.f1 { left: 52px; top: 102px; width: 45px; height: 46px; } .f2 { left: 141px; top: 118px; width: 38px; height: 38px; } .f3 { left: 241px; top: 105px; width: 40px; height: 33px; }
.f4 { left: 70px; top: 196px; width: 49px; height: 49px; } .f5 { left: 214px; top: 186px; width: 38px; height: 38px; } .f6 { left: 175px; top: 260px; width: 49px; height: 48px; }
.feas { position: absolute; left: 108px; top: 329px; width: 100px; display: flex; flex-direction: column; align-items: center; text-align: center; }
.feas svg { width: 11px; height: 11px; }
.feas b { font-size: 3.800px; font-weight: 600; line-height: 5px; margin-top: 2px; color: #333; }
.feas span { font-size: 2.700px; line-height: 3.900px; color: #999; white-space: nowrap; }

.thumb { width: 45px; height: 46px; background: #fff; border-radius: 6px; box-shadow: 1px 2px 0 #000; flex: none; }
.thumb svg { display: block; width: 45px; height: 46px; }
.arr { width: 16px; flex: none; text-align: center; color: #aaa; font-size: 6px; }

.hscroll { position: absolute; left: 119px; top: 566px; width: 1226px; height: 6px; background: #ababab; border-radius: 3px; }

/* Floating app bars */
.topbar { position: absolute; left: 16px; right: 16px; top: 7px; display: flex; gap: 8px; }
.bar { height: 49px; background: #fff; border-radius: 14px; box-shadow: 0 0 0 1px #e8e8e8, 0 2px 2px rgba(0,0,0,.12); display: flex; align-items: center; flex: none; }
.b1 { width: 403px; margin-right: auto; padding-left: 11px; }
.b2 { width: 192px; padding-left: 7px; }
.b3 { width: 244px; padding-left: 8px; }
.b4 { width: 178px; padding-left: 6px; }
.logo { width: 34px; height: 26px; flex: none; }
.mural-name { margin-left: 15px; width: 118px; font-family: "Inter", sans-serif; font-size: 13.500px; font-weight: 600; color: #333; white-space: nowrap; flex: none; }
.chev { width: 12px; height: 8px; margin-left: 3px; flex: none; }
.div { width: 1px; height: 26px; background: #e5e5e5; margin-left: 15px; flex: none; }
.div2 { margin-left: 3px; }
.cell { width: 36px; height: 32px; display: flex; align-items: center; justify-content: center; flex: none; position: relative; }
.cell svg { width: 21px; height: 21px; }
.cell .wide { width: 20px; height: 6px; }
.b1 .div + .cell { margin-left: 1px; }
.dbtn { background: #1f1f1f; border-radius: 8px; height: 32px; display: flex; align-items: center; justify-content: center; flex: none; color: #fff; }
.list { width: 32px; }
.list svg { width: 20px; height: 20px; }
.c3a { margin-left: 2px; }
.one { position: absolute; right: 5px; top: 0; font-size: 8px; line-height: 9px; color: #333; font-family: Roboto, sans-serif; }
.share { width: 84px; height: 32px; background: #e02a38; border-radius: 8px; color: #fff; display: flex; align-items: center; margin-left: 2px; padding-left: 12px; gap: 8px; font-family: "Inter", sans-serif; font-size: 11px; font-weight: 700; flex: none; }
.share svg { width: 21px; height: 23px; flex: none; }
.rocket { width: 54px; margin-left: 2px; gap: 5px; font-size: 11px; font-weight: 700; font-family: "Inter", sans-serif; }
.rocket svg { width: 18px; height: 18px; }
.msq { width: 32px; height: 32px; background: #fa5a1f; color: #fff; border-radius: 6px; font-size: 17px; text-align: center; line-height: 32px; margin-left: 4px; flex: none; font-family: Roboto, sans-serif; }
.b4 .msq + .cell { margin-left: 2px; }

.tools { position: absolute; left: 16px; top: 98px; width: 52px; height: 374px; background: #1f1f1f; border-radius: 14px; display: flex; flex-direction: column; align-items: center; gap: 26px; padding-top: 16px; box-shadow: 0 1px 4px rgba(0,0,0,.25); }
.tools svg { width: 20px; height: 20px; flex: none; }
.tools svg:nth-child(3) { width: 22px; }
.tools svg:nth-child(5) { height: 24px; margin: -2px 0; }
.tools svg:nth-child(8) { height: 6px; margin-top: 7px; }

.react { position: absolute; left: 632px; top: 513px; width: 102px; height: 48px; background: #fff; border-radius: 12px; box-shadow: 0 0 0 1px #eee, 0 2px 3px rgba(0,0,0,.12); display: flex; align-items: center; padding-left: 15px; }
.smile { width: 18px; height: 20px; flex: none; }
.rdiv { width: 1px; height: 32px; background: #e5e5e5; margin-left: 11px; flex: none; }
.me { position: relative; margin-left: 16px; width: 32px; height: 32px; background: #fa5a1f; border: 2px solid #16c060; border-radius: 8px; color: #fff; font-size: 15px; text-align: center; line-height: 28px; flex: none; font-family: Roboto, sans-serif; }
.me svg { position: absolute; right: -5px; bottom: -5px; width: 16px; height: 16px; }

.rightcol { position: absolute; left: 1066px; top: 64px; width: 284px; display: flex; flex-direction: column; }
.outline { height: 284px; background: #fff; border-radius: 14px; box-shadow: 0 0 0 1px #e8e8e8, 0 2px 3px rgba(0,0,0,.12); display: flex; flex-direction: column; }
.ol-head { height: 44px; display: flex; align-items: center; padding-left: 20px; flex: none; font-family: "Inter", sans-serif; }
.ol-head h2 { font-size: 14.500px; font-weight: 500; color: #222; margin-top: 21px; width: 155px; flex: none; }
.oh1 { width: 18px; height: 16px; flex: none; }
.oh2 { width: 18px; height: 18px; margin-left: 18px; flex: none; }
.ol-div { width: 1px; height: 20px; background: #e9e9e9; margin-left: 11px; flex: none; }
.oh3 { width: 11px; height: 11px; margin-left: 16px; flex: none; }
.ol-body { height: 220px; display: flex; position: relative; }
.ol-list { width: 267px; height: 220px; overflow: hidden; padding-left: 20px; }
.ol-card { width: 238px; height: 99px; border: 1.500px solid #eee; border-radius: 12px; background: linear-gradient(#fff 35%, #f8f8f8); margin-bottom: 10.500px; padding: 15.500px 0 0 15px; font-family: "Open Sans", sans-serif; }
.ol-card.first { height: 109px; margin-top: -18px; }
.ol-title { display: flex; align-items: center; height: 18px; font-size: 13.500px; color: #333; }
.ol-title span { width: 22px; font-weight: 600; flex: none; }
.ol-title b { font-weight: 600; width: 174px; flex: none; white-space: nowrap; }
.ol-title svg { width: 5px; height: 18px; fill: #222; flex: none; }
.ol-card p { margin: 5px 14px 0 16px; font-size: 11.500px; line-height: 16px; color: #777; height: 48px; white-space: nowrap; -webkit-mask-image: linear-gradient(#000, rgba(0,0,0,.08) 41px, transparent 41px); mask-image: linear-gradient(#000, rgba(0,0,0,.08) 41px, transparent 41px); }
.ol-card.first p { -webkit-mask-image: linear-gradient(#000, rgba(0,0,0,.05)); mask-image: linear-gradient(#000, rgba(0,0,0,.05)); }
.ol-scroll { width: 17px; background: #f1f1f1; position: relative; }
.ua, .da { position: absolute; left: 4.500px; width: 8px; height: 5px; }
.ua { top: 7px; } .da { bottom: 7px; }
.ol-thumb { position: absolute; left: 2px; width: 13px; top: 78px; height: 49px; background: #bcbcbc; }

.minimap { height: 148px; margin-top: 8px; background: #fff; border-radius: 14px; overflow: hidden; box-shadow: 0 0 0 1.500px #dcdcdc; }
.minimap svg { display: block; width: 283px; height: 148px; margin-left: 1px; }
.zoombar { height: 48px; margin-top: 9px; margin-left: 16px; width: 268px; background: #fff; border-radius: 12px; box-shadow: 0 0 0 1px #e8e8e8, 0 2px 3px rgba(0,0,0,.1); display: flex; align-items: center; padding-left: 13px; font-family: "Inter", sans-serif; }
.zi { flex: none; }
.zi1 { width: 22px; height: 22px; }
.zi2 { width: 22px; height: 22px; margin-left: 14px; }
.map { width: 32px; margin-left: 9px; }
.map svg { width: 22px; height: 20px; }
.zdiv { width: 1px; height: 20px; background: #e5e5e5; margin-left: 5px; flex: none; }
.zminus { width: 12px; height: 3px; background: #222; border-radius: 1px; margin-left: 14px; flex: none; }
.zpct { width: 40px; margin-left: 27px; text-align: center; font-size: 14px; color: #333; flex: none; }
.zplus { width: 13px; height: 13px; margin-left: 26px; flex: none; }

/* Taskbar */
.taskbar { height: 40px; background: #17041a; display: flex; align-items: stretch; flex: none; color: #fff; font-family: Roboto, sans-serif; }
.ti.win { width: 16px; height: 16px; margin: 12px 16px 0 16px; flex: none; }
.search { width: 344px; background: #f1f1f1; display: flex; align-items: center; padding-left: 9px; flex: none; color: #333; font-size: 14.700px; }
.ring { width: 22px; height: 22px; border: 3px solid #111; border-radius: 50%; flex: none; }
.search span { margin-left: 9px; width: 277px; flex: none; white-space: nowrap; }
.search svg { width: 12px; height: 20px; flex: none; }
.tasks { display: flex; background: linear-gradient(90deg,#17041a 12%,#0a0a0a 12%); width: 521px; flex: none; }
.task { width: 49.300px; display: flex; align-items: center; justify-content: center; position: relative; flex: none; }
.task svg { width: 24px; height: 24px; }
.ptv svg { width: 15px; height: 17px; }
.task.on::after, .task.active::after { content: ""; position: absolute; left: 0; right: 0; bottom: 0; height: 2px; background: #dea2e8; }
.task.active { background: #3a3a3a; }
.cm { position: absolute; left: 25px; top: 20px; width: 15px; height: 15px; border-radius: 50%; background: #e8431f; font-size: 8px; line-height: 15px; text-align: center; font-weight: 500; }
.tray { display: flex; align-items: center; flex: 1; padding-left: 191px; font-size: 13px; }
.tr1 { width: 15px; height: 16px; flex: none; }
.tr2 { width: 11px; height: 7px; margin-left: 21px; flex: none; }
.tr3 { width: 15px; height: 14px; margin-left: 15px; flex: none; }
.tr4 { width: 15px; height: 14px; margin-left: 3px; flex: none; }
.lang { margin-left: 13px; width: 24px; font-size: 12.500px; flex: none; white-space: nowrap; }
.clock { width: 70px; margin-left: 6px; display: flex; flex-direction: column; align-items: center; font-size: 12px; line-height: 17px; flex: none; white-space: nowrap; }
.tr5 { width: 16px; height: 15px; margin-left: 13px; flex: none; }
.defs { position: absolute; }
```
